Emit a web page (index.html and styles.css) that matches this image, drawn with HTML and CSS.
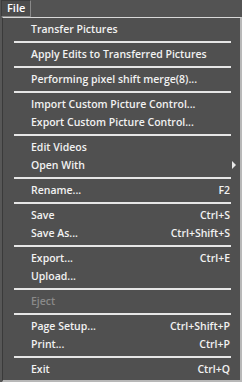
FILE: index.html
```html
<!DOCTYPE html>
<html>
<head>
<meta charset="utf-8">
<link rel="stylesheet" href="styles.css">
</head>
<body>
<div class="bar">
  <div class="file">File</div>
</div>
<div class="menu">
  <div class="item"><span>Transfer Pictures</span></div>
  <div class="sep"></div>
  <div class="item"><span>Apply Edits to Transferred Pictures</span></div>
  <div class="sep"></div>
  <div class="item"><span>Performing pixel shift merge(8)...</span></div>
  <div class="sep"></div>
  <div class="item"><span>Import Custom Picture Control...</span></div>
  <div class="item"><span>Export Custom Picture Control...</span></div>
  <div class="sep"></div>
  <div class="item"><span>Edit Videos</span></div>
  <div class="item"><span>Open With</span><span class="arrow"></span></div>
  <div class="sep"></div>
  <div class="item"><span>Rename...</span><span class="key">F2</span></div>
  <div class="sep"></div>
  <div class="item"><span>Save</span><span class="key">Ctrl+S</span></div>
  <div class="item"><span>Save As...</span><span class="key">Ctrl+Shift+S</span></div>
  <div class="sep"></div>
  <div class="item"><span>Export...</span><span class="key">Ctrl+E</span></div>
  <div class="item"><span>Upload...</span></div>
  <div class="sep"></div>
  <div class="item disabled"><span>Eject</span></div>
  <div class="sep"></div>
  <div class="item"><span>Page Setup...</span><span class="key">Ctrl+Shift+P</span></div>
  <div class="item"><span>Print...</span><span class="key">Ctrl+P</span></div>
  <div class="sep"></div>
  <div class="item"><span>Exit</span><span class="key">Ctrl+Q</span></div>
</div>
</body>
</html>
```
FILE: styles.css
```css
html, body {
  margin: 0;
  padding: 0;
  background: #575757;
  width: 242px;
  height: 382px;
  overflow: hidden;
  font-family: "Open Sans", "Noto Sans", sans-serif;
  font-size: 10.5px;
  font-weight: 600;
  color: #f2f2f2;
}
.bar {
  height: 17px;
  display: flex;
  background: #535353;
}
.file {
  box-sizing: border-box;
  width: 30px;
  height: 17px;
  margin-left: 1px;
  border: 1px solid #3c3c3c;
  border-right-color: #8a8a8a;
  border-bottom-color: #8a8a8a;
  background: #4c4c4c;
  padding-left: 5px;
  line-height: 14px;
  font-size: 11px;
  color: #ffffff;
}
.menu {
  box-sizing: border-box;
  margin-left: 2px;
  width: 240px;
  height: 365px;
  border: 1px solid #3a3a3a;
  border-top-color: #d8d8d8;
  border-right: 2px solid #b8b8b8;
  border-bottom: 2px solid #b8b8b8;
  background: #505050;
  padding: 2px 0 2px 0;
}
.item {
  height: 18px;
  display: flex;
  align-items: center;
  justify-content: space-between;
  padding: 0 10px 0 28px;
  line-height: 18px;
  white-space: nowrap;
}
.item.disabled {
  color: #8a8a8a;
}
.key {
  text-align: right;
}
.arrow {
  width: 0;
  height: 0;
  border-left: 4px solid #e8e8e8;
  border-top: 4px solid transparent;
  border-bottom: 4px solid transparent;
  margin-right: -6px;
}
.sep {
  height: 7px;
  display: flex;
  align-items: center;
  padding: 0 9px 0 11px;
}
.sep::before {
  content: "";
  flex: 1;
  height: 2px;
  background: #e6e6e6;
}
```
